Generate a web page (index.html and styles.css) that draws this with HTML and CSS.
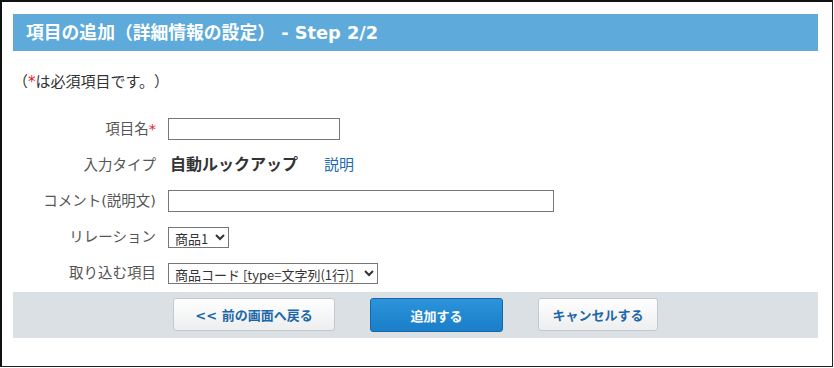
FILE: index.html
```html
<!DOCTYPE html>
<html lang="ja">
<head>
<meta charset="utf-8">
<title>項目の追加</title>
<link rel="stylesheet" href="styles.css">
</head>
<body>
<div class="frame">
  <h1 class="title">項目の追加（詳細情報の設定） - Step 2/2</h1>
  <p class="notice">（<span class="req">*</span>は必須項目です。）</p>
  <div class="form">
    <div class="label">項目名<span class="req">*</span></div>
    <div class="field"><input class="text short" type="text"></div>

    <div class="label">入力タイプ</div>
    <div class="field"><span class="type">自動ルックアップ</span><a class="help" href="#">説明</a></div>

    <div class="label">コメント(説明文)</div>
    <div class="field"><input class="text long" type="text"></div>

    <div class="label">リレーション</div>
    <div class="field"><select class="sel sel-rel"><option>商品1</option></select></div>

    <div class="label">取り込む項目</div>
    <div class="field"><select class="sel sel-item"><option>商品コード [type=文字列(1行)]</option></select></div>
  </div>
  <div class="actions">
    <button class="btn btn-back" type="button">&lt;&lt; 前の画面へ戻る</button>
    <button class="btn btn-primary" type="button">追加する</button>
    <button class="btn btn-cancel" type="button">キャンセルする</button>
  </div>
</div>
</body>
</html>
```

FILE: styles.css
```css
html, body {
  margin: 0;
  padding: 0;
  background: #ffffff;
}

body {
  font-family: "DejaVu Sans", "Noto Sans CJK JP", sans-serif;
  color: #333333;
  text-spacing-trim: space-all;
}

.frame {
  box-sizing: border-box;
  width: 833px;
  height: 367px;
  border-top: 2px solid #111111;
  border-left: 2px solid #111111;
  border-right: 1px solid #222222;
  border-bottom: 1px solid #222222;
  padding: 12px 14px 0 11px;
}

.title {
  margin: 0;
  height: 37px;
  line-height: 37px;
  padding-left: 13px;
  background: #5eaadb;
  color: #ffffff;
  font-size: 17.8px;
  font-weight: bold;
  letter-spacing: 0;
}

.notice {
  margin: 21px 0 0 0;
  height: 20px;
  line-height: 20px;
  font-size: 15px;
  color: #333333;
}

.req {
  color: #e8202a;
}

.form {
  margin-top: 19px;
  display: grid;
  grid-template-columns: 143px 1fr;
  grid-auto-rows: 36px;
  column-gap: 12px;
  align-items: center;
}

.label {
  text-align: right;
  font-size: 14.5px;
  line-height: 20px;
  color: #555555;
  white-space: nowrap;
}

.field {
  display: flex;
  align-items: center;
}

.text {
  box-sizing: border-box;
  height: 22px;
  border: 1px solid #777777;
  border-radius: 0;
  padding: 0 3px;
  margin: 0;
  font-family: inherit;
  font-size: 13px;
  background: #ffffff;
}

.short { width: 172px; }
.long { width: 386px; }

.type {
  margin-left: 2px;
  font-size: 16px;
  font-weight: bold;
  color: #333333;
  line-height: 20px;
}

.help {
  margin-left: 26px;
  font-size: 15px;
  line-height: 20px;
  color: #1e6bb0;
  text-decoration: none;
}

.sel {
  box-sizing: border-box;
  height: 21px;
  border: 1px solid #777777;
  border-radius: 0;
  padding: 0 0 0 2px;
  margin: 0;
  font-family: "Noto Sans CJK JP", sans-serif;
  font-size: 13px;
  line-height: 19px;
  color: #333333;
  background: #ffffff;
}

.sel-rel { width: 61px; }
.sel-item { width: 210px; }

.actions {
  box-sizing: border-box;
  height: 46px;
  margin-top: 1px;
  background: #dbe0e4;
  display: flex;
  justify-content: center;
  align-items: flex-start;
  gap: 35px;
  padding-top: 6px;
}

.btn {
  box-sizing: border-box;
  height: 33px;
  border-radius: 3px;
  font-family: inherit;
  font-size: 13px;
  font-weight: bold;
  padding: 0;
  cursor: pointer;
}

.btn-back,
.btn-cancel {
  border: 1px solid #c3c9ce;
  background: linear-gradient(#ffffff, #eceeef);
  color: #1d67a8;
}

.btn-back { width: 162px; }
.btn-cancel { width: 120px; }

.btn-primary {
  width: 133px;
  height: 34px;
  border: 1px solid #1468a8;
  background: linear-gradient(#2b94db, #1a7ec8);
  color: #ffffff;
}
```
